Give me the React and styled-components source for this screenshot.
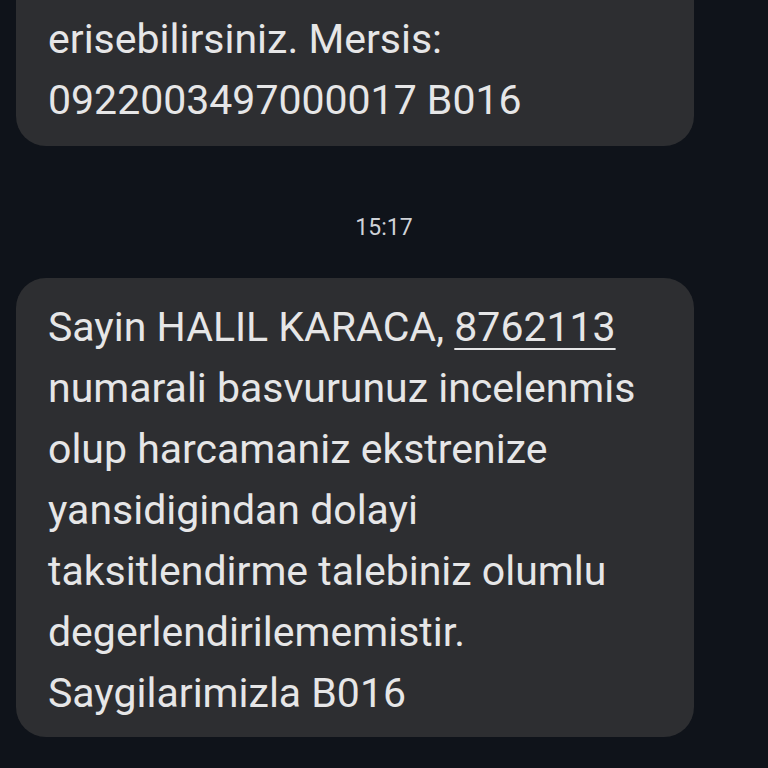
import React from 'react';
import styled, { createGlobalStyle } from 'styled-components';

const GlobalStyle = createGlobalStyle`
  html, body {
    margin: 0;
    padding: 0;
    background: #0f131a;
  }
  * { box-sizing: border-box; }
`;

const Screen = styled.div`
  width: 768px;
  height: 768px;
  overflow: hidden;
  background: #0f131a;
  display: flex;
  flex-direction: column;
  font-family: Roboto, "Noto Sans", sans-serif;
`;

const Bubble = styled.div`
  background: #2d2e31;
  border-radius: 30px;
  margin: ${props => props.$offset || '0px'} 74px 0 16px;
  padding: ${props => props.$padding};
  color: #e6e6e7;
  font-size: 41px;
  line-height: 61px;
`;

const Line = styled.div`
  white-space: nowrap;
`;

const Link = styled.span`
  text-decoration: underline;
  text-decoration-thickness: 2px;
  text-underline-offset: 7px;
`;

const Stamp = styled.div`
  text-align: center;
  color: #cfd2d7;
  font-size: 23px;
  line-height: 28px;
  padding: 68px 0 0;
  height: 132px;
`;

const earlier = [
  'internetten ya da mobilden',
  'erisebilirsiniz. Mersis:',
  '0922003497000017 B016',
];

const latest = [
  <>Sayin HALIL KARACA, <Link>8762113</Link></>,
  'numarali basvurunuz incelenmis',
  'olup harcamaniz ekstrenize',
  'yansidigindan dolayi',
  'taksitlendirme talebiniz olumlu',
  'degerlendirilememistir.',
  'Saygilarimizla B016',
];

export default function App() {
  return (
    <>
      <GlobalStyle />
      <Screen>
        <Bubble $padding="0 32px 15px" $offset="-52px">
          {earlier.map((l, i) => <Line key={i}>{l}</Line>)}
        </Bubble>
        <Stamp>15:17</Stamp>
        <Bubble $padding="19px 32px 13px">
          {latest.map((l, i) => <Line key={i}>{l}</Line>)}
        </Bubble>
      </Screen>
    </>
  );
}
